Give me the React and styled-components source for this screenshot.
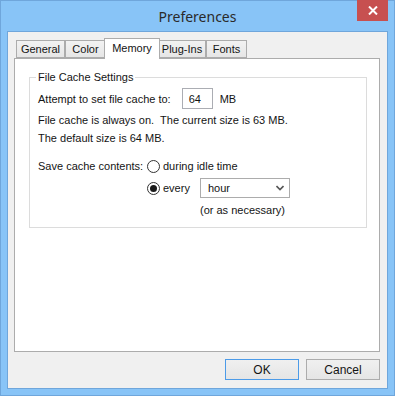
import React, { useState } from 'react';
import styled, { createGlobalStyle } from 'styled-components';

const frameBlue = '#88c4f7'
const frameEdge = '#6fa6db'
const face = '#f0f0f0'
const line = '#acacac'
const text = '#141414'

const GlobalStyle = createGlobalStyle`
html, body {
    margin: 0;
    padding: 0;
    background: ${frameBlue};
}
`

const Frame = styled.div`
width: 395px;
height: 396px;
box-sizing: border-box;
background: ${frameBlue};
border: 1px solid ${frameEdge};
padding: 0 6px 6px 6px;
display: flex;
flex-direction: column;
position: relative;
font-family: "Liberation Sans", Arial, sans-serif;
font-size: 11px;
color: ${text};
`

const TitleBar = styled.div`
height: 29px;
display: flex;
align-items: center;
justify-content: center;
font-family: "Noto Sans", "Open Sans", sans-serif;
font-size: 14px;
color: #2a2a2a;
padding-top: 1px;
`

const CloseButton = styled.div`
position: absolute;
top: -1px;
right: 6px;
width: 31px;
height: 21px;
background: #c75050;
display: flex;
align-items: center;
justify-content: center;
`

const Client = styled.div`
flex: 1;
background: ${face};
border: 1px solid ${frameEdge};
display: flex;
flex-direction: column;
padding: 7px 7px 8px 6px;
`

const TabStrip = styled.div`
display: flex;
align-items: flex-end;
height: 20px;
padding-left: 2px;
margin-bottom: -1px;
position: relative;
z-index: 1;
`

const Tab = styled.div`
box-sizing: border-box;
height: ${({active}) => active ? "21px" : "18px"};
width: ${({w, active}) => active ? w + 4 : w}px;
margin: ${({active}) => active ? "0 -2px" : "0 0 1px 0"};
border: 1px solid ${line};
border-bottom: ${({active}) => active ? "none" : `1px solid ${line}`};
background: ${({active}) => active ? "#ffffff" : "linear-gradient(#f2f2f2, #e6e6e6)"};
position: relative;
z-index: ${({active}) => active ? 2 : 1};
display: flex;
justify-content: center;
padding-top: ${({active}) => active ? "3px" : "2px"};
white-space: nowrap;
`

const Panel = styled.div`
height: 294px;
box-sizing: border-box;
background: #ffffff;
border: 1px solid ${line};
padding: 18px 12px 0 14px;
`

const Group = styled.div`
position: relative;
border: 1px solid #dcdcdc;
padding: 10px 0 8px 8px;
`

const GroupLabel = styled.span`
position: absolute;
top: -8px;
left: 6px;
padding: 0 2px;
background: #ffffff;
line-height: 15px;
`

const Row = styled.div`
display: flex;
align-items: center;
height: ${({h}) => h || 18}px;
margin-top: ${({mt}) => mt || 0}px;
white-space: pre;
`

const NumberBox = styled.div`
box-sizing: border-box;
width: 31px;
height: 21px;
margin: 0 7px 0 11px;
border: 1px solid #abadb3;
background: #ffffff;
display: flex;
align-items: center;
padding-left: 6px;
`

const ChoiceGrid = styled.div`
display: grid;
grid-template-columns: 109px 53px 90px;
grid-template-rows: 18px 20px 18px;
row-gap: 3px;
margin-top: 10px;
align-items: center;
white-space: nowrap;
`

const Choice = styled.label`
display: flex;
align-items: center;
grid-column: ${({span}) => span || "auto"};
`

const RadioMark = styled.span`
box-sizing: border-box;
width: 13px;
height: 13px;
border-radius: 50%;
border: 1px solid #333333;
background: #ffffff;
margin-right: 3px;
display: flex;
align-items: center;
justify-content: center;

&::after {
    content: "";
    width: 7px;
    height: 7px;
    border-radius: 50%;
    background: ${({checked}) => checked ? "#1a1a1a" : "transparent"};
}
`

const Select = styled.div`
box-sizing: border-box;
height: 20px;
width: 90px;
border: 1px solid #acacac;
background: #ffffff;
display: flex;
align-items: center;
justify-content: space-between;
padding: 0 5px 0 7px;
`

const Note = styled.div`
grid-column: 3;
`

const ButtonRow = styled.div`
display: flex;
justify-content: flex-end;
gap: 7px;
margin-top: 7px;
`

const Button = styled.div`
box-sizing: border-box;
width: 74px;
height: 21px;
border: 1px solid ${({primary}) => primary ? "#4c9be8" : line};
background: linear-gradient(#f0f0f0, #e5e5e5);
display: flex;
align-items: center;
justify-content: center;
font-size: 12px;
`

const tabs = [
    { label: "General", w: 49 },
    { label: "Color", w: 41 },
    { label: "Memory", w: 52 },
    { label: "Plug-Ins", w: 48 },
    { label: "Fonts", w: 41 },
]

const App = () => {
    const [active] = useState("Memory")
    const [when, setWhen] = useState("every")

    return (
        <>
            <GlobalStyle />
            <Frame>
                <TitleBar>Preferences</TitleBar>
                <CloseButton>
                    <svg width="10" height="9" viewBox="0 0 10 9">
                        <path d="M1 0.5 L9 8.5 M9 0.5 L1 8.5" stroke="#ffffff" strokeWidth="2" />
                    </svg>
                </CloseButton>
                <Client>
                    <TabStrip>
                        {tabs.map((t) => (
                            <Tab key={t.label} w={t.w} active={t.label === active}>{t.label}</Tab>
                        ))}
                    </TabStrip>
                    <Panel>
                        <Group>
                            <GroupLabel>File Cache Settings</GroupLabel>
                            <Row h={21}>
                                Attempt to set file cache to:
                                <NumberBox>64</NumberBox>
                                MB
                            </Row>
                            <Row mt={2}>File cache is always on.  The current size is 63 MB.</Row>
                            <Row>The default size is 64 MB.</Row>
                            <ChoiceGrid>
                                <span>Save cache contents:</span>
                                <Choice span="2 / 4" onClick={() => setWhen("idle")}>
                                    <RadioMark checked={when === "idle"} />during idle time
                                </Choice>
                                <span />
                                <Choice onClick={() => setWhen("every")}>
                                    <RadioMark checked={when === "every"} />every
                                </Choice>
                                <Select>
                                    hour
                                    <svg width="8" height="6" viewBox="0 0 8 6">
                                        <path d="M0.5 1 L4 4.5 L7.5 1" fill="none" stroke="#555555" strokeWidth="1.6" />
                                    </svg>
                                </Select>
                                <Note>(or as necessary)</Note>
                            </ChoiceGrid>
                        </Group>
                    </Panel>
                    <ButtonRow>
                        <Button primary>OK</Button>
                        <Button>Cancel</Button>
                    </ButtonRow>
                </Client>
            </Frame>
        </>
    );
};

export default App;
